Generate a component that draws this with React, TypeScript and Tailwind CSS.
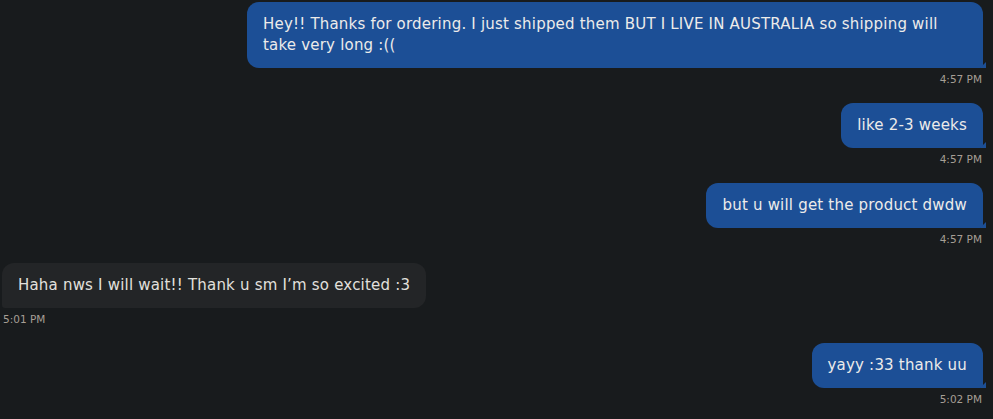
import React from 'react';

type Msg = { text: string; time: string; mine: boolean };

const messages: Msg[] = [
  {
    text: 'Hey!! Thanks for ordering. I just shipped them BUT I LIVE IN AUSTRALIA so shipping will take very long :((',
    time: '4:57 PM',
    mine: true,
  },
  { text: 'like 2-3 weeks', time: '4:57 PM', mine: true },
  { text: 'but u will get the product dwdw', time: '4:57 PM', mine: true },
  { text: 'Haha nws I will wait!! Thank u sm I’m so excited :3', time: '5:01 PM', mine: false },
  { text: 'yayy :33 thank uu', time: '5:02 PM', mine: true },
];

const Bubble: React.FC<{ msg: Msg }> = ({ msg }) => {
  if (msg.mine) {
    return (
      <div className="flex flex-col items-end">
        <div className="relative max-w-[736px] bg-[#1c4f96] text-[#ecebea] rounded-[12px] rounded-br-[3px] px-4 py-3 text-[15px] leading-[21px] tracking-[0.2px]">
          {msg.text}
          <span className="absolute right-[-3px] bottom-0 w-0 h-0 border-l-[6px] border-l-transparent border-b-[6px] border-b-[#1c4f96]" />
        </div>
        <span className="mt-1 text-[10.5px] leading-[14px] text-[#a69e95] pr-[1px]">
          {msg.time}
        </span>
      </div>
    );
  }
  return (
    <div className="flex flex-col items-start">
      <div className="relative max-w-[736px] bg-[#232527] text-[#e2e0dd] rounded-[12px] rounded-bl-[3px] px-4 py-3 text-[15px] leading-[21px] tracking-[0.2px]">
        {msg.text}
      </div>
      <span className="mt-1 text-[10.5px] leading-[14px] text-[#a69e95] pl-[1px]">
        {msg.time}
      </span>
    </div>
  );
};

export default function App() {
  return (
    <div
      className="w-[993px] h-[419px] bg-[#181b1d] overflow-hidden pt-[2px] pl-[2px] pr-[10px] flex flex-col gap-[17px]"
      style={{ fontFamily: '"DejaVu Sans", sans-serif' }}
    >
      {messages.map((m, i) => (
        <Bubble key={i} msg={m} />
      ))}
    </div>
  );
}
